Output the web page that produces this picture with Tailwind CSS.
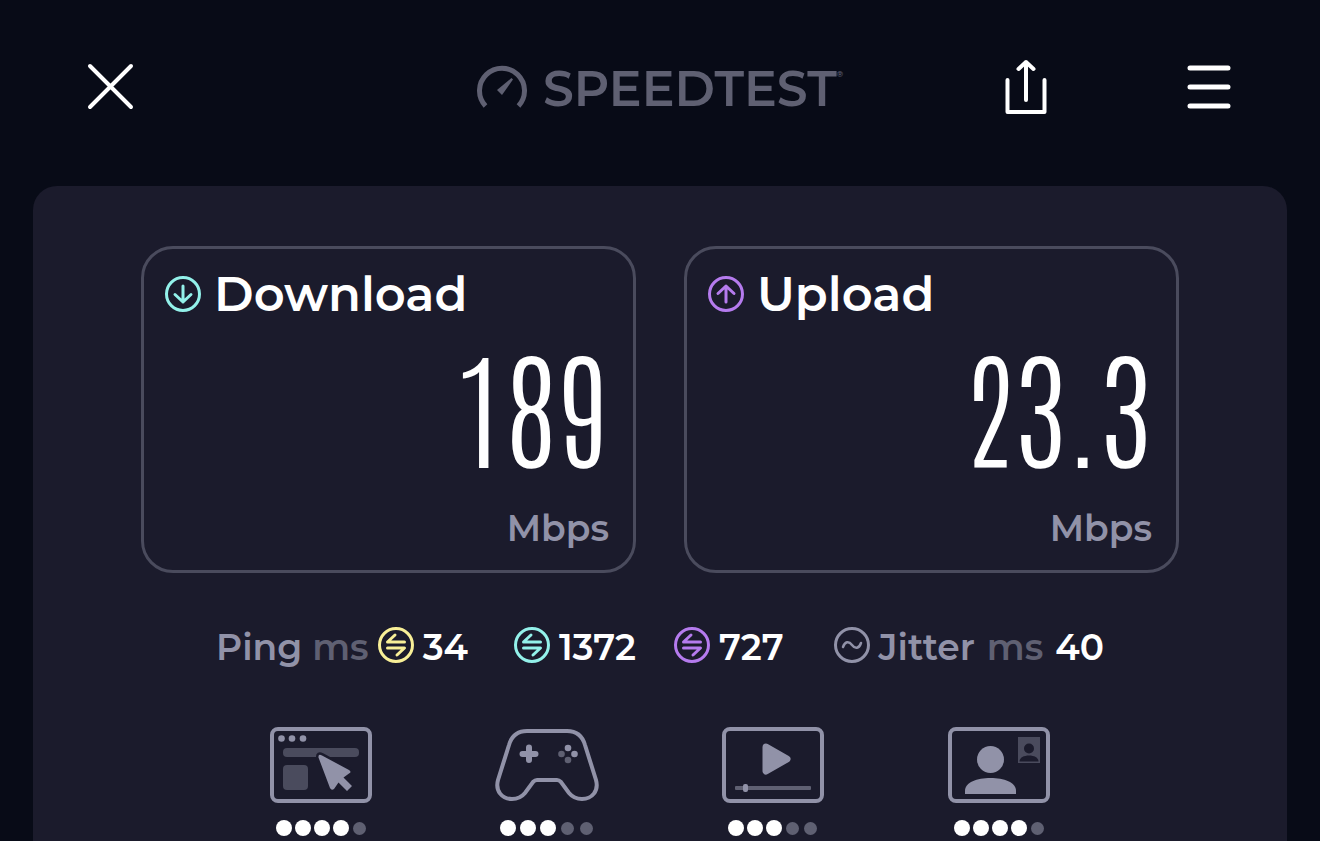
<!DOCTYPE html>
<html lang="en">
<head>
  <meta charset="UTF-8" />
  <meta name="viewport" content="width=device-width, initial-scale=1.0" />
  <title>Speedtest</title>
  <script src="https://cdn.jsdelivr.net/npm/@tailwindcss/browser@4"></script>
</head>
<body class="bg-[#080b17] min-h-screen flex flex-col overflow-hidden font-[Montserrat,Inter,sans-serif] font-semibold text-white">

  <header class="grid grid-cols-[1fr_auto_1fr] items-center h-[186px] px-[86px] pb-[13px]">
    <button aria-label="Close" class="justify-self-start">
      <svg class="w-12 h-12" viewBox="0 0 48 48" fill="none" stroke="currentColor" stroke-width="4" stroke-linecap="round">
        <path d="M4 3l41 41M45 3L4 44" />
      </svg>
    </button>

    <div class="flex items-center gap-4 mt-1 text-[#5f6072]">
      <svg class="w-[50px] h-[50px]" viewBox="0 0 50 50" fill="none">
        <path d="M8.5 42A22.5 22.5 0 1 1 41.5 42" stroke="currentColor" stroke-width="5" />
        <path d="M20 26L34.500 14L36 15.500L25 31z" fill="currentColor" />
      </svg>
      <div class="flex">
        <span class="text-[49px] leading-[50px]">SPEEDTEST</span>
        <span class="text-[8px] leading-[20px]">®</span>
      </div>
    </div>

    <div class="justify-self-end flex items-center gap-[138px]">
      <button aria-label="Share">
        <svg class="w-11 h-14" viewBox="0 0 44 56" fill="none" stroke="currentColor" stroke-width="4" stroke-linecap="round" stroke-linejoin="round">
          <path d="M3.500 21v32h37V21M22 41V3M14.500 10L22 3l7.500 7" />
        </svg>
      </button>
      <button aria-label="Menu">
        <svg class="w-12 h-12" viewBox="0 0 48 48" fill="none" stroke="currentColor" stroke-width="5" stroke-linecap="round">
          <path d="M4 5h38M4 24h38M4 43h38" />
        </svg>
      </button>
    </div>
  </header>

  <main class="flex-1 mx-[33px] rounded-t-3xl bg-[#1b1b2c] pt-[60px]">
    <section class="grid grid-cols-2 gap-12 px-[108px]">
      <div class="border-3 border-[#4a4b5d] rounded-[32px] h-[327px] pl-5 pr-6 pt-[15px]">
        <h2 class="flex items-center gap-3 text-5xl leading-[60px]">
          <svg class="w-[38px] h-[38px] text-[#93f1ea]" viewBox="0 0 38 38" fill="none" stroke="currentColor" stroke-width="3" stroke-linecap="round" stroke-linejoin="round">
            <circle cx="19" cy="19" r="16.500" />
            <path d="M19 11v16M11 19.500l8 7.500 8-7.500" />
          </svg>
          Download
        </h2>
        <p class="mt-1 text-right text-[128px] leading-[150px] font-thin font-[Antonio,'Roboto_Condensed',sans-serif]">189</p>
        <p class="mt-5 text-right text-4xl leading-[60px] text-[#9192a8]">Mbps</p>
      </div>

      <div class="border-3 border-[#4a4b5d] rounded-[32px] h-[327px] pl-5 pr-6 pt-[15px]">
        <h2 class="flex items-center gap-3 text-5xl leading-[60px]">
          <svg class="w-[38px] h-[38px] text-[#b57bee]" viewBox="0 0 38 38" fill="none" stroke="currentColor" stroke-width="3" stroke-linecap="round" stroke-linejoin="round">
            <circle cx="19" cy="19" r="16.500" />
            <path d="M19 27V11M11 18.500l8-7.500 8 7.500" />
          </svg>
          Upload
        </h2>
        <p class="mt-1 text-right text-[128px] leading-[150px] font-thin font-[Antonio,'Roboto_Condensed',sans-serif]">23.3</p>
        <p class="mt-5 text-right text-4xl leading-[60px] text-[#9192a8]">Mbps</p>
      </div>
    </section>

    <section class="flex justify-between items-center mt-[44px] px-[183px] text-4xl leading-[60px]">
      <div class="flex items-center gap-2">
        <span class="text-[#9192a8]">Ping <span class="text-[#5f6072]">ms</span></span>
        <svg class="w-[38px] h-[38px] mb-1 text-[#f8ef97]" viewBox="0 0 38 38" fill="none" stroke="currentColor" stroke-width="3" stroke-linecap="round" stroke-linejoin="round">
          <circle cx="19" cy="19" r="16.500" />
          <path d="M27.500 16H10.500l7.500-7M10.500 22h17l-7.500 7" />
        </svg>
        <span>34</span>
      </div>
      <div class="flex items-center gap-2 pl-2">
        <svg class="w-[38px] h-[38px] mb-1 text-[#93f1ea]" viewBox="0 0 38 38" fill="none" stroke="currentColor" stroke-width="3" stroke-linecap="round" stroke-linejoin="round">
          <circle cx="19" cy="19" r="16.500" />
          <path d="M27.500 16H10.500l7.500-7M10.500 22h17l-7.500 7" />
        </svg>
        <span>1372</span>
      </div>
      <div class="flex items-center gap-2 pr-3">
        <svg class="w-[38px] h-[38px] mb-1 text-[#b57bee]" viewBox="0 0 38 38" fill="none" stroke="currentColor" stroke-width="3" stroke-linecap="round" stroke-linejoin="round">
          <circle cx="19" cy="19" r="16.500" />
          <path d="M27.500 16H10.500l7.500-7M10.500 22h17l-7.500 7" />
        </svg>
        <span>727</span>
      </div>
      <div class="flex items-center gap-3">
        <div class="flex items-center gap-2 text-[#9192a8]">
          <svg class="w-[38px] h-[38px] mb-1" viewBox="0 0 38 38" fill="none" stroke="currentColor" stroke-width="3" stroke-linecap="round">
            <circle cx="19" cy="19" r="16.500" />
            <path stroke-width="2.500" d="M10 21c2-6 6-6 9-2s7 4 9-2" />
          </svg>
          <span>Jitter</span>
        </div>
        <span class="text-[#5f6072]">ms</span>
        <span>40</span>
      </div>
    </section>

    <section class="grid grid-cols-4 mt-[50px] px-[175px]">
      <div class="flex flex-col items-center gap-[17px]">
        <svg class="w-[102px] h-[76px]" viewBox="0 0 102 76" fill="#9192a8">
          <rect x="2" y="2" width="98" height="72" rx="6" fill="none" stroke="#9192a8" stroke-width="4" />
          <circle cx="11.500" cy="11.500" r="3.300" />
          <circle cx="22" cy="11.500" r="3.300" />
          <circle cx="33" cy="11.500" r="3.300" />
          <rect x="13" y="21" width="76" height="9" rx="4" fill="#4a4b5d" />
          <rect x="13" y="38" width="25" height="25" rx="4" fill="#4a4b5d" />
          <path d="M48.500 30.500Q48 26.500 52 28.500L79 43Q82 45 79 46.500L73.500 50.500L82 59L77 64L68.500 55.500L64 62Q61.500 64 60 61z" stroke="#1b1b2c" stroke-width="5" stroke-linejoin="round" paint-order="stroke" />
        </svg>
        <div class="flex items-center gap-[3px]">
          <i class="size-4 rounded-full bg-white"></i>
          <i class="size-4 rounded-full bg-white"></i>
          <i class="size-4 rounded-full bg-white"></i>
          <i class="size-4 rounded-full bg-white"></i>
          <i class="size-[13px] rounded-full bg-[#5f6072] mx-px"></i>
        </div>
      </div>

      <div class="flex flex-col items-center gap-[17px]">
        <svg class="w-[104px] h-[76px]" viewBox="0 0 104 76" fill="#9192a8">
          <path d="M32 4H72Q86 4 90 18L101 53C104 64 97 72 87 72Q79 72 74 66L66 55Q64 53 62 53H42Q40 53 38 55L30 66Q25 72 17 72C7 72 0 64 3 53L14 18Q18 4 32 4z" fill="none" stroke="#9192a8" stroke-width="4" />
          <path d="M34 20.500v12.500M27.500 27h13" stroke="#9192a8" stroke-width="6" stroke-linecap="round" />
          <circle cx="73" cy="21" r="3.300" />
          <circle cx="79.500" cy="27" r="3.300" />
          <circle cx="66.500" cy="27" r="3.300" fill="#5f6072" />
          <circle cx="73" cy="33" r="3.300" fill="#5f6072" />
        </svg>
        <div class="flex items-center gap-1">
          <i class="size-4 rounded-full bg-white"></i>
          <i class="size-4 rounded-full bg-white"></i>
          <i class="size-4 rounded-full bg-white"></i>
          <i class="size-[13px] rounded-full bg-[#5f6072] mx-px"></i>
          <i class="size-[13px] rounded-full bg-[#5f6072] mx-px"></i>
        </div>
      </div>

      <div class="flex flex-col items-center gap-[17px]">
        <svg class="w-[102px] h-[76px]" viewBox="0 0 102 76" fill="#9192a8">
          <rect x="2" y="2" width="98" height="72" rx="6" fill="none" stroke="#9192a8" stroke-width="4" />
          <path d="M44 20L65 32L44 44z" stroke="#9192a8" stroke-width="7" stroke-linejoin="round" />
          <rect x="13" y="59" width="76" height="4" rx="1" fill="#5f6072" />
          <rect x="21" y="57" width="5" height="8" rx="2" />
        </svg>
        <div class="flex items-center gap-[3px]">
          <i class="size-4 rounded-full bg-white"></i>
          <i class="size-4 rounded-full bg-white"></i>
          <i class="size-4 rounded-full bg-white"></i>
          <i class="size-[13px] rounded-full bg-[#5f6072] mx-px"></i>
          <i class="size-[13px] rounded-full bg-[#5f6072] mx-px"></i>
        </div>
      </div>

      <div class="flex flex-col items-center gap-[17px]">
        <svg class="w-[102px] h-[76px]" viewBox="0 0 102 76" fill="#9192a8">
          <rect x="2" y="2" width="98" height="72" rx="6" fill="none" stroke="#9192a8" stroke-width="4" />
          <circle cx="42.500" cy="32.500" r="13.500" />
          <path d="M17 67V64C17 55 29 51 42.500 51S68 55 68 64V67z" />
          <rect x="70" y="10" width="22" height="26" fill="#4a4b5d" />
          <circle cx="81" cy="21.500" r="5" fill="#1b1b2c" />
          <path d="M71.500 34.500C71.500 30.500 76 28.500 81 28.500S90.500 30.500 90.500 34.500z" fill="#1b1b2c" />
        </svg>
        <div class="flex items-center gap-[3px]">
          <i class="size-4 rounded-full bg-white"></i>
          <i class="size-4 rounded-full bg-white"></i>
          <i class="size-4 rounded-full bg-white"></i>
          <i class="size-4 rounded-full bg-white"></i>
          <i class="size-[13px] rounded-full bg-[#5f6072] mx-px"></i>
        </div>
      </div>
    </section>
  </main>
</body>
</html>
